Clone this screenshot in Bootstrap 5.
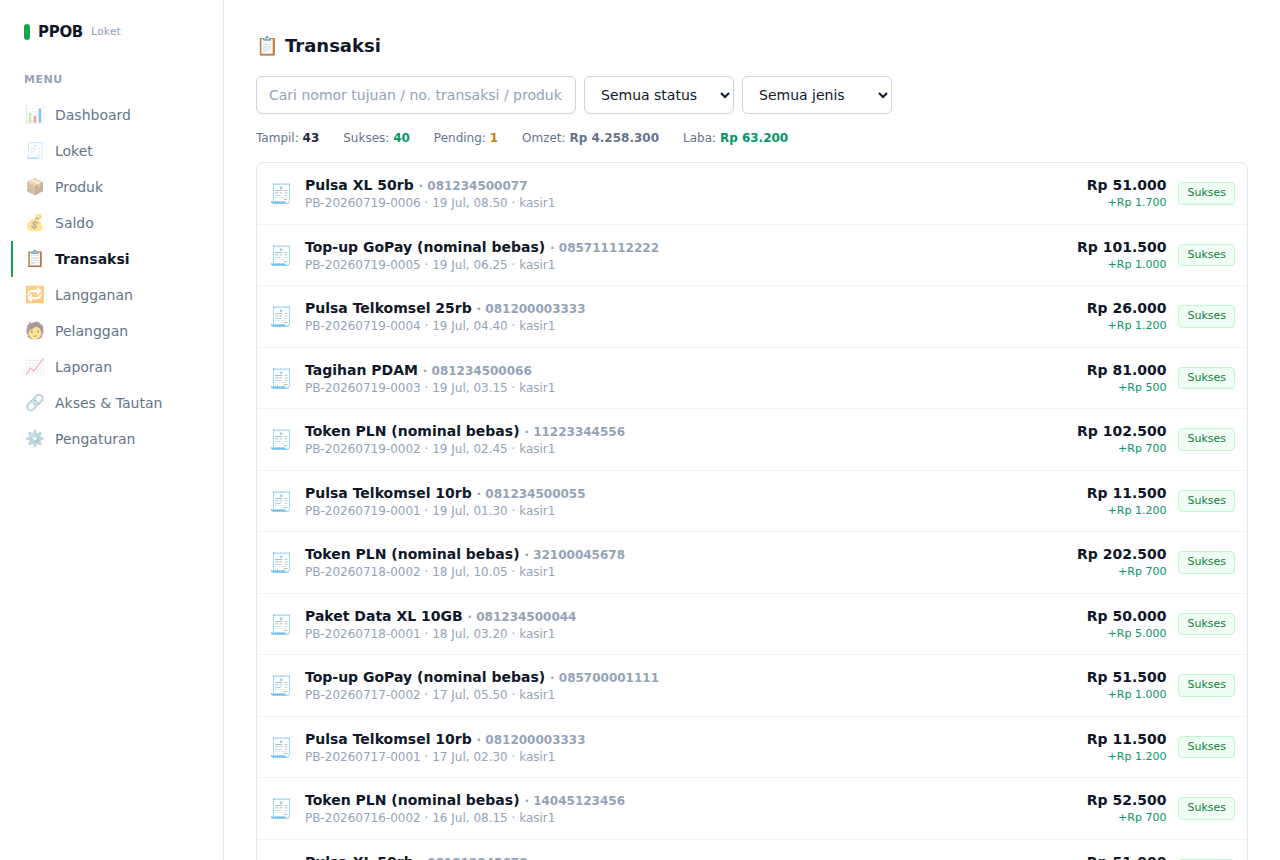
<!DOCTYPE html>
<html lang="id">
<head>
<meta charset="utf-8">
<meta name="viewport" content="width=device-width, initial-scale=1">
<title>Transaksi</title>
<link href="https://cdn.jsdelivr.net/npm/bootstrap@5.3.0/dist/css/bootstrap.min.css" rel="stylesheet">
<style>
body { font-family: "DejaVu Sans", sans-serif; font-size: 14px; line-height: 1.5; color: #0f172a; background: #fff; }
.sidebar { width: 224px; border-right: 1px solid #e2e8f0; }
.brand { padding: 20px 24px 0; gap: 8px; }
.brand-bar { width: 6px; height: 16px; border-radius: 3px; background: #16a34a; }
.brand-name { font-size: 15px; line-height: 24px; font-weight: 700; letter-spacing: -.02em; }
.brand-sub { font-size: 11px; color: #94a3b8; }
.menu-label { font-size: 11px; line-height: 16px; font-weight: 700; letter-spacing: .05em; color: #94a3b8; padding: 28px 24px 0; margin-bottom: 9px; }
.menu { padding: 0 11px; }
.menu .nav-link { display: flex; align-items: center; gap: 10px; height: 36px; padding: 0 12px; border-left: 2px solid transparent; color: #64748b; }
.menu .nav-link.active { border-color: #16a34a; color: #0f172a; font-weight: 700; }
.menu-icon { width: 20px; font-size: 16px; text-align: center; opacity: .5; font-weight: 400; }
.active .menu-icon { opacity: 1; }
main { padding: 32px; }
.page-title { font-size: 18px; line-height: 28px; font-weight: 700; margin-bottom: 16px; gap: 7px; }
.filters .form-control, .filters .native-select { height: 38px; font-size: 14px; border: 1px solid #cbd5e1; border-radius: 6px; color: #0f172a; padding: 0 12px; background: #fff; }
.filters .form-control { width: 320px; }
.filters .form-control::placeholder { color: #94a3b8; }
.filters .native-select { width: 150px; }
.stats { font-size: 12px; line-height: 18px; color: #64748b; gap: 24px; margin: 15px 0; }
.ink { color: #1e293b; }
.gain { color: #059669; }
.wait { color: #d97706; }
.tx-list { border: 1px solid #e2e8f0; border-radius: 8px; }
.tx { display: flex; align-items: center; gap: 12px; padding: 12px; border-bottom: 1px solid #f1f5f9; }
.tx-icon { width: 24px; font-size: 19px; line-height: 24px; }
.tx-name { font-weight: 700; line-height: 20px; }
.tx-no { font-size: 12px; line-height: 16px; color: #94a3b8; }
.tx-meta { font-size: 12px; line-height: 16px; color: #94a3b8; }
.tx-gain { font-size: 11px; line-height: 1.5; }
.status { font-size: 11px; line-height: 1.5; padding: 2px 8px; border: 1px solid #bbf7d0; border-radius: 4px; background: #f0fdf4; color: #15803d; }
</style>
</head>
<body>
<div class="d-flex min-vh-100">
  <aside class="sidebar flex-shrink-0">
    <div class="brand d-flex align-items-center">
      <span class="brand-bar"></span><span class="brand-name">PPOB</span><span class="brand-sub">Loket</span>
    </div>
    <div class="menu-label">MENU</div>
    <nav class="menu nav flex-column flex-nowrap">
      <a class="nav-link" href="#"><span class="menu-icon">📊</span>Dashboard</a>
      <a class="nav-link" href="#"><span class="menu-icon">🧾</span>Loket</a>
      <a class="nav-link" href="#"><span class="menu-icon">📦</span>Produk</a>
      <a class="nav-link" href="#"><span class="menu-icon">💰</span>Saldo</a>
      <a class="nav-link active" href="#" aria-current="page"><span class="menu-icon">📋</span>Transaksi</a>
      <a class="nav-link" href="#"><span class="menu-icon">🔁</span>Langganan</a>
      <a class="nav-link" href="#"><span class="menu-icon">🧑</span>Pelanggan</a>
      <a class="nav-link" href="#"><span class="menu-icon">📈</span>Laporan</a>
      <a class="nav-link" href="#"><span class="menu-icon">🔗</span>Akses &amp; Tautan</a>
      <a class="nav-link" href="#"><span class="menu-icon">⚙️</span>Pengaturan</a>
    </nav>
  </aside>
  <main class="flex-grow-1">
    <h1 class="page-title d-flex"><span>📋</span>Transaksi</h1>
    <form class="filters d-flex flex-wrap gap-2">
      <input class="form-control" type="text" aria-label="Cari transaksi" placeholder="Cari nomor tujuan / no. transaksi / produk">
      <select class="native-select" aria-label="Status"><option>Semua status</option></select>
      <select class="native-select" aria-label="Jenis"><option>Semua jenis</option></select>
    </form>
    <div class="stats d-flex flex-wrap">
      <span>Tampil: <b class="ink">43</b></span>
      <span>Sukses: <b class="gain">40</b></span>
      <span>Pending: <b class="wait">1</b></span>
      <span>Omzet: <b>Rp 4.258.300</b></span>
      <span>Laba: <b class="gain">Rp 63.200</b></span>
    </div>
    <div class="tx-list" id="txList"></div>
  </main>
</div>
<script src="https://cdn.jsdelivr.net/npm/bootstrap@5.3.0/dist/js/bootstrap.bundle.min.js"></script>
<script>
const transactions = [
  ['Pulsa XL 50rb', '081234500077', 'PB-20260719-0006', '19 Jul, 08.50', '51.000', '1.700'],
  ['Top-up GoPay (nominal bebas)', '085711112222', 'PB-20260719-0005', '19 Jul, 06.25', '101.500', '1.000'],
  ['Pulsa Telkomsel 25rb', '081200003333', 'PB-20260719-0004', '19 Jul, 04.40', '26.000', '1.200'],
  ['Tagihan PDAM', '081234500066', 'PB-20260719-0003', '19 Jul, 03.15', '81.000', '500'],
  ['Token PLN (nominal bebas)', '11223344556', 'PB-20260719-0002', '19 Jul, 02.45', '102.500', '700'],
  ['Pulsa Telkomsel 10rb', '081234500055', 'PB-20260719-0001', '19 Jul, 01.30', '11.500', '1.200'],
  ['Token PLN (nominal bebas)', '32100045678', 'PB-20260718-0002', '18 Jul, 10.05', '202.500', '700'],
  ['Paket Data XL 10GB', '081234500044', 'PB-20260718-0001', '18 Jul, 03.20', '50.000', '5.000'],
  ['Top-up GoPay (nominal bebas)', '085700001111', 'PB-20260717-0002', '17 Jul, 05.50', '51.500', '1.000'],
  ['Pulsa Telkomsel 10rb', '081200003333', 'PB-20260717-0001', '17 Jul, 02.30', '11.500', '1.200'],
  ['Token PLN (nominal bebas)', '14045123456', 'PB-20260716-0002', '16 Jul, 08.15', '52.500', '700'],
  ['Pulsa XL 50rb', '081812345678', 'PB-20260716-0001', '16 Jul, 04.10', '51.000', '1.700']
];
document.getElementById('txList').innerHTML = transactions.map(([name, no, id, time, price, gain]) => `
  <div class="tx">
    <div class="tx-icon">🧾</div>
    <div class="flex-grow-1">
      <div class="tx-name">${name} <span class="tx-no">· ${no}</span></div>
      <div class="tx-meta">${id} · ${time} · kasir1</div>
    </div>
    <div class="text-end">
      <div class="tx-name">Rp ${price}</div>
      <div class="tx-gain gain">+Rp ${gain}</div>
    </div>
    <span class="status">Sukses</span>
  </div>`).join('');
</script>
</body>
</html>
